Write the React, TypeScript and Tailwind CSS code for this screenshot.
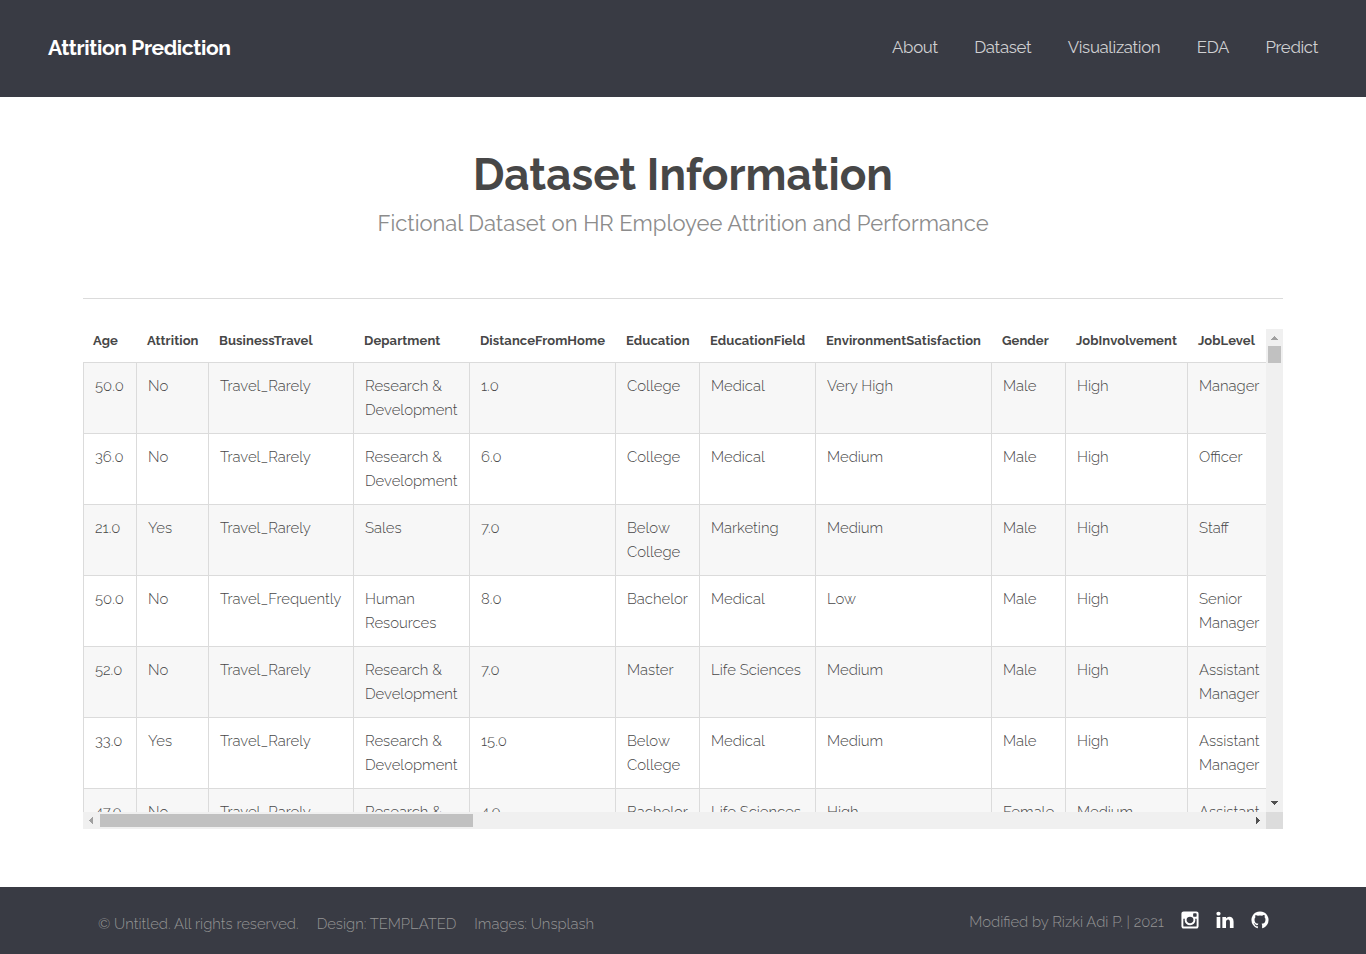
import React from "react";

const NAV = ["About", "Dataset", "Visualization", "EDA", "Predict"];

const HEADERS = [
  "Age",
  "Attrition",
  "BusinessTravel",
  "Department",
  "DistanceFromHome",
  "Education",
  "EducationField",
  "EnvironmentSatisfaction",
  "Gender",
  "JobInvolvement",
  "JobLevel",
];

const ROWS = [
  ["50.0", "No", "Travel_Rarely", "Research & Development", "1.0", "College", "Medical", "Very High", "Male", "High", "Manager"],
  ["36.0", "No", "Travel_Rarely", "Research & Development", "6.0", "College", "Medical", "Medium", "Male", "High", "Officer"],
  ["21.0", "Yes", "Travel_Rarely", "Sales", "7.0", "Below College", "Marketing", "Medium", "Male", "High", "Staff"],
  ["50.0", "No", "Travel_Frequently", "Human Resources", "8.0", "Bachelor", "Medical", "Low", "Male", "High", "Senior Manager"],
  ["52.0", "No", "Travel_Rarely", "Research & Development", "7.0", "Master", "Life Sciences", "Medium", "Male", "High", "Assistant Manager"],
  ["33.0", "Yes", "Travel_Rarely", "Research & Development", "15.0", "Below College", "Medical", "Medium", "Male", "High", "Assistant Manager"],
  ["47.0", "No", "Travel_Rarely", "Research & Development", "4.0", "Bachelor", "Life Sciences", "High", "Female", "Medium", "Assistant Manager"],
];

const COLUMNS =
  "grid grid-cols-[53px_72px_145px_116px_146px_84px_116px_176px_74px_122px_84px]";

const ICONS = [
  {
    name: "Instagram",
    d: "M1490 1426v-648h-135q20 63 20 131 0 126-64 232.5t-174 168.5-240 62q-197 0-337-135.5t-140-327.5q0-68 20-131h-141v648q0 26 17.5 43.5t43.5 17.5h1069q25 0 43-17.5t18-43.5zm-284-533q0-124-90.5-211.5t-218.5-87.5q-127 0-217.5 87.5t-90.5 211.5 90.5 211.5 217.5 87.5q128 0 218.5-87.5t90.5-211.5zm284-360v-165q0-28-20-48.5t-49-20.5h-174q-29 0-49 20.5t-20 48.5v165q0 29 20 49t49 20h174q29 0 49-20t20-49zm174-208v1142q0 81-58 139t-139 58h-1142q-81 0-139-58t-58-139v-1142q0-81 58-139t139-58h1142q81 0 139 58t58 139z",
  },
  {
    name: "LinkedIn",
    d: "M477 625v991h-330v-991h330zm21-306q1 73-50.5 122t-135.5 49h-2q-82 0-132-49t-50-122q0-74 51.5-122.5t134.5-48.5 133 48.5 51 122.5zm1166 729v568h-329v-530q0-105-40.5-164.5t-126.5-59.5q-63 0-105.5 34.5t-63.5 85.5q-11 30-11 81v553h-329q2-399 2-647t-1-296l-1-48h329v144h-2q20-32 41-56t56.5-52 87-43.5 114.5-15.5q171 0 275 113.5t104 332.5z",
  },
  {
    name: "GitHub",
    d: "M896 128q209 0 385.5 103t279.5 279.5 103 385.5q0 251-146.5 451.5t-378.5 277.5q-27 5-40-7t-13-30q0-3 .5-76.5t.5-134.5q0-97-52-142 57-6 102.5-18t94-39 81-66.5 53-105 20.5-150.5q0-119-79-206 37-91-8-204-28-9-81 11t-92 44l-38 24q-93-26-192-26t-192 26q-16-11-42.5-27t-83.5-38.5-85-13.5q-45 113-8 204-79 87-79 206 0 85 20.5 150t52.5 105 80.5 67 94 39 102.5 18q-39 36-49 103-21 10-45 15t-57 5-65.5-21.5-55.5-62.5q-19-32-48.5-52t-49.5-24l-20-3q-21 0-29 4.5t-5 11.5 9 14 13 12l7 5q22 10 43.5 38t31.5 51l10 23q13 38 44 61.5t67 30 69.5 7 55.5-3.5l23-4q0 38 .5 88.5t.5 54.5q0 18-13 30t-40 7q-232-77-378.5-277.5t-146.5-451.5q0-209 103-385.5t279.5-279.5 385.5-103z",
  },
];

function DataTable() {
  return (
    <div className="h-[483px] overflow-hidden">
      <div className="w-[1188px]">
        <div className={`${COLUMNS} h-[33px]`}>
          {HEADERS.map((h) => (
            <div
              key={h}
              className="pl-[11px] text-[13px] leading-6 font-bold tracking-[0.09px] text-[#474747] first:pl-[10px]"
            >
              {h}
            </div>
          ))}
        </div>
        {ROWS.map((row, r) => (
          <div
            key={r}
            className={`${COLUMNS} h-[71px] border-t border-[#dbdbdb] ${r % 2 === 0 ? "bg-[#f7f7f7]" : "bg-white"}`}
          >
            {row.map((cell, c) => (
              <div
                key={c}
                className="border-l border-[#dbdbdb] pt-[11px] pr-[10px] pl-[11px] text-[14.88px] leading-6 font-light"
              >
                {cell}
              </div>
            ))}
          </div>
        ))}
      </div>
    </div>
  );
}

function VerticalScrollbar() {
  return (
    <div className="flex flex-col items-center bg-[#f0f0f0]">
      <div className="h-[17px] pt-[7px]">
        <svg width="7" height="4" className="fill-[#a0a0a0]" shapeRendering="crispEdges">
          <path d="M3 0h1v1h1v1h1v1h1v1H0V3h1V2h1V1h1z" />
        </svg>
      </div>
      <div className="h-[17px] w-[13px] bg-[#c1c1c1]" />
      <div className="mt-auto h-[17px] pt-[6px]">
        <svg width="7" height="4" className="fill-[#505050]" shapeRendering="crispEdges">
          <path d="M0 0h7v1H6v1H5v1H4v1H3V3H2V2H1V1H0z" />
        </svg>
      </div>
    </div>
  );
}

function HorizontalScrollbar() {
  return (
    <div className="flex items-center bg-[#f0f0f0]">
      <div className="w-[17px] pl-[6px]">
        <svg width="4" height="7" className="fill-[#a0a0a0]" shapeRendering="crispEdges">
          <path d="M0 3h1V2h1V1h1V0h1v7H3V6H2V5H1V4H0z" />
        </svg>
      </div>
      <div className="h-[13px] w-[373px] bg-[#c1c1c1]" />
      <div className="ml-auto w-[17px] pl-[7px]">
        <svg width="4" height="7" className="fill-[#505050]" shapeRendering="crispEdges">
          <path d="M0 0h1v1h1v1h1v1h1v1H3v1H2v1H1v1H0z" />
        </svg>
      </div>
    </div>
  );
}

export default function App() {
  return (
    <div className="flex h-[954px] flex-col overflow-hidden bg-white font-[Raleway,Lato,sans-serif] text-[#474747]">
      <header className="flex h-[97px] shrink-0 items-center justify-between bg-[#393b44] px-12 pb-[2px]">
        <div className="text-[21px] leading-[30px] font-bold tracking-[-0.38px] text-white">Attrition Prediction</div>
        <nav className="flex gap-[36.5px] pb-[2px] text-[16.8px] leading-6 tracking-[-0.33px] text-[#d0d0d2]">
          {NAV.map((n) => (
            <a key={n}>{n}</a>
          ))}
        </nav>
      </header>

      <main className="mx-auto w-[1200px]">
        <div className="flex h-[202px] flex-col items-center border-b border-[#dbdbdb] pt-[45px]">
          <h1 className="text-[44px] leading-[66px] font-bold">Dataset Information</h1>
          <p className="-mt-px text-[22px] leading-[33px] text-[#8c8c8c]">
            Fictional Dataset on HR Employee Attrition and Performance
          </p>
        </div>
        <div className="mt-[30px] grid grid-cols-[1183px_17px] grid-rows-[483px_17px]">
          <DataTable />
          <VerticalScrollbar />
          <HorizontalScrollbar />
          <div className="bg-[#dcdcdc]" />
        </div>
      </main>

      <footer className="mt-auto h-[67px] shrink-0 bg-[#393b44] text-[14.85px] font-light text-[#959595]">
        <div className="mx-auto flex w-[1200px] justify-between pr-[13px] pl-[15px]">
          <div className="flex gap-[18px] pt-[25px] leading-6">
            <span>© Untitled. All rights reserved.</span>
            <span>Design: TEMPLATED</span>
            <span>Images: Unsplash</span>
          </div>
          <div className="flex pt-[23px] leading-6">
            <span>Modified by Rizki Adi P. | 2021</span>
            <div className="ml-[16.5px] flex gap-[14.8px] text-white">
              {ICONS.map((icon) => (
                <svg
                  key={icon.name}
                  viewBox="0 0 1792 1792"
                  className="size-5 fill-current"
                  aria-label={icon.name}
                >
                  <path d={icon.d} />
                </svg>
              ))}
            </div>
          </div>
        </div>
      </footer>
    </div>
  );
}
